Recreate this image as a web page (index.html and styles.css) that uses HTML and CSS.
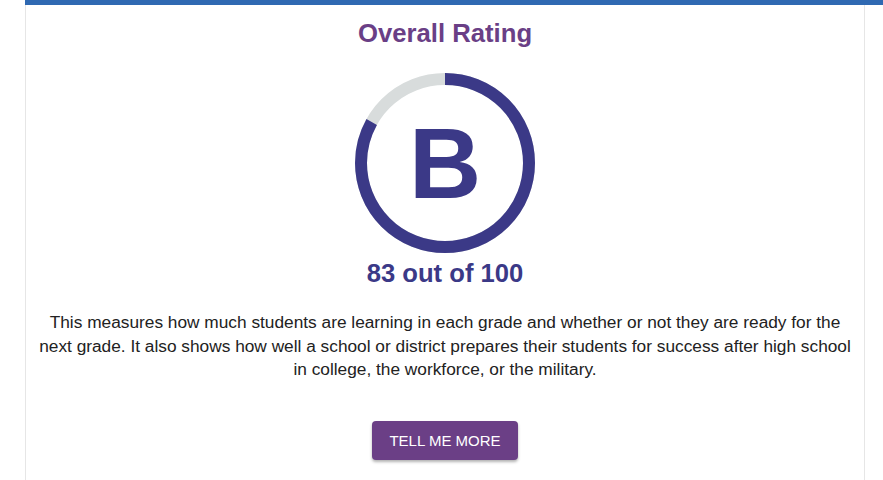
FILE: index.html
```html
<!DOCTYPE html>
<html lang="en">
<head>
    <meta charset="UTF-8">
    <meta name="viewport" content="width=device-width, initial-scale=1.0">
    <title>Overall Rating</title>
    <link rel="stylesheet" href="styles.css">
</head>
<body>
    <div class="topbar"></div>
    <div class="card">
        <h2 class="card-title">Overall Rating</h2>

        <!-- grade ring: 83% of the circle filled, starting at 12 o'clock -->
        <div class="grade">
            <svg class="grade-ring" width="180" height="180" viewBox="0 0 180 180">
                <circle cx="90" cy="90" r="84" fill="none" stroke="#d8dcdc" stroke-width="12"/>
                <circle cx="90" cy="90" r="84" fill="none" stroke="#3b3987" stroke-width="12"
                        stroke-dasharray="438.07 527.79" transform="rotate(-90 90 90)"/>
            </svg>
            <span class="grade-letter">B</span>
        </div>

        <div class="score">83 out of 100</div>

        <p class="summary">This measures how much students are learning in each grade and whether or not they are ready for the next grade. It also shows how well a school or district prepares their students for success after high school in college, the workforce, or the military.</p>

        <button class="btn">Tell me more</button>
    </div>
</body>
</html>
```

FILE: styles.css
```css
body {
    margin: 0;
    font-family: 'Liberation Sans', Arial, sans-serif;
    background: #ffffff;
    color: #222222;
}

.topbar {
    height: 5px;
    background: #2f69b2;
    margin-left: 25px;
}

.card {
    margin: 0 18px 0 25px;
    border-left: 1px solid #e6e6e6;
    border-right: 1px solid #e6e6e6;
    padding: 14px 12px 20px;
    text-align: center;
}

.card-title {
    margin: 0;
    font-size: 25.7px;
    font-weight: bold;
    color: #6a3f86;
    line-height: 28px;
}

.grade {
    position: relative;
    width: 180px;
    height: 180px;
    margin: 26px auto 0;
}

.grade-ring {
    display: block;
}

.grade-letter {
    position: absolute;
    inset: 0;
    display: flex;
    align-items: center;
    justify-content: center;
    font-size: 100px;
    font-weight: bold;
    color: #3b3987;
}

.score {
    margin-top: 6px;
    font-size: 25.6px;
    font-weight: bold;
    color: #3b3987;
    line-height: 28px;
}

.summary {
    margin: 24px 0 0;
    font-size: 17.3px;
    line-height: 23.5px;
    color: #222222;
}

.btn {
    margin-top: 39px;
    width: 146px;
    height: 39px;
    border: none;
    border-radius: 4px;
    background: #6b3f86;
    color: #ffffff;
    font-family: inherit;
    font-size: 15px;
    text-transform: uppercase;
    box-shadow: 0 2px 3px rgba(0, 0, 0, 0.3);
    cursor: pointer;
}
```
